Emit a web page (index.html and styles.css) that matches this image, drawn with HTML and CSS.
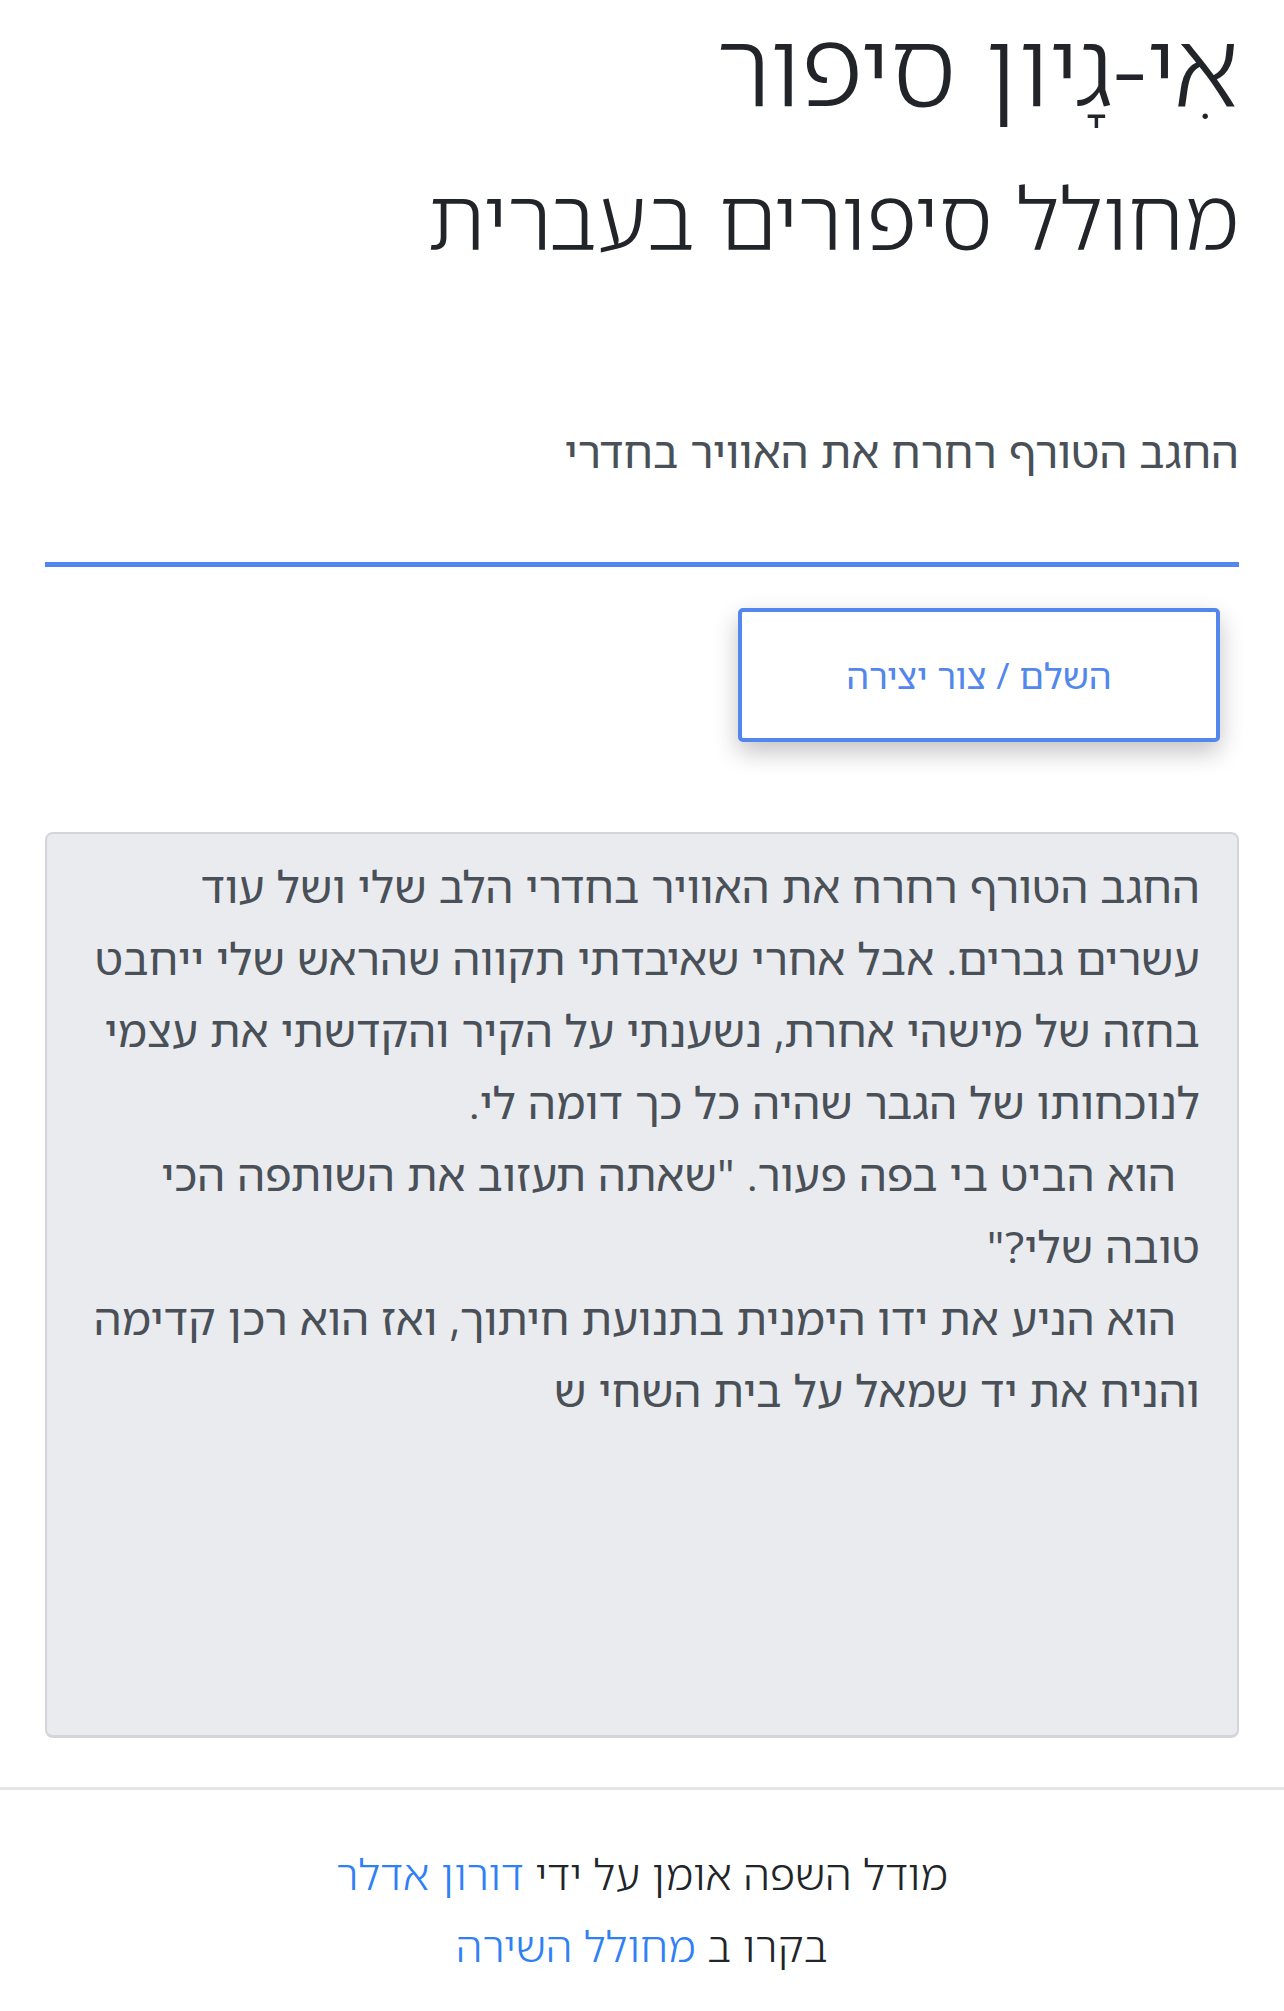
FILE: index.html
```html
<!DOCTYPE html>
<html lang="he" dir="rtl">
<head>
<meta charset="utf-8">
<title>אִי-גָיון סיפור</title>
<link rel="stylesheet" href="styles.css">
</head>
<body>
<main class="page">
  <header class="hero">
    <h1 class="title">אִי-גָיון סיפור</h1>
    <h2 class="subtitle">מחולל סיפורים בעברית</h2>
  </header>
  <div class="prompt">
    <div class="prompt-text">החגב הטורף רחרח את האוויר בחדרי</div>
  </div>
  <div class="actions">
    <button class="btn" type="button">השלם / צור יצירה</button>
  </div>
  <div class="output">
    <p class="para">החגב הטורף רחרח את האוויר בחדרי הלב שלי ושל עוד עשרים גברים. אבל אחרי שאיבדתי תקווה שהראש שלי ייחבט בחזה של מישהי אחרת, נשענתי על הקיר והקדשתי את עצמי לנוכחותו של הגבר שהיה כל כך דומה לי.</p>
    <p class="para indented">הוא הביט בי בפה פעור. "שאתה תעזוב את השותפה הכי טובה שלי?"</p>
    <p class="para indented">הוא הניע את ידו הימנית בתנועת חיתוך, ואז הוא רכן קדימה והניח את יד שמאל על בית השחי ש</p>
  </div>
</main>
<hr class="sep">
<footer class="footer">
  <p class="credit">מודל השפה אומן על ידי <a class="link" href="#">דורון אדלר</a></p>
  <p class="credit">בקרו ב <a class="link" href="#">מחולל השירה</a></p>
</footer>
</body>
</html>
```

FILE: styles.css
```css
html, body {
  margin: 0;
  padding: 0;
  background: #ffffff;
}

body {
  font-family: "Noto Sans Hebrew", "Open Sans", "Liberation Sans", sans-serif;
  color: #212529;
  direction: rtl;
}

.page {
  padding: 0 45px;
}

.hero {
  padding-top: 5px;
}

.title {
  margin: 0;
  font-size: 106px;
  font-weight: 300;
  line-height: 120px;
  color: #212529;
}

.subtitle {
  margin: 20px 0 0 0;
  font-size: 86px;
  font-weight: 300;
  line-height: 144px;
  color: #212529;
}

.prompt {
  margin-top: 132px;
  border-bottom: 5px solid #5387eb;
  padding-bottom: 81px;
}

.prompt-text {
  font-size: 44.5px;
  line-height: 60px;
  color: #495057;
}

.actions {
  display: flex;
  justify-content: flex-start;
  padding: 41px 19px 0 0;
}

.btn {
  width: 482px;
  height: 134px;
  background: #ffffff;
  border: 4px solid #5387eb;
  border-radius: 5px;
  color: #5387eb;
  font-family: "Noto Sans Hebrew", "Open Sans", sans-serif;
  font-size: 36px;
  box-shadow: 0 10px 24px rgba(0, 0, 0, 0.24);
}

.output {
  margin-top: 90px;
  height: 906px;
  box-sizing: border-box;
  background: #e9ebef;
  border: 2px solid #d3d5db;
  border-bottom-width: 3px;
  border-radius: 8px;
  padding: 16px 37px 16px 37px;
  color: #495057;
  font-size: 44.5px;
  line-height: 72px;
}

.para {
  margin: 0;
}

.indented {
  text-indent: 24px;
}

.sep {
  margin: 49px 0 0 0;
  border: 0;
  height: 3px;
  background: #e6e6e6;
}

.footer {
  padding-top: 48px;
  text-align: center;
  font-size: 43px;
  font-weight: 300;
  line-height: 72px;
}

.credit {
  margin: 0;
}

.link {
  color: #3080f5;
  text-decoration: none;
}
```
